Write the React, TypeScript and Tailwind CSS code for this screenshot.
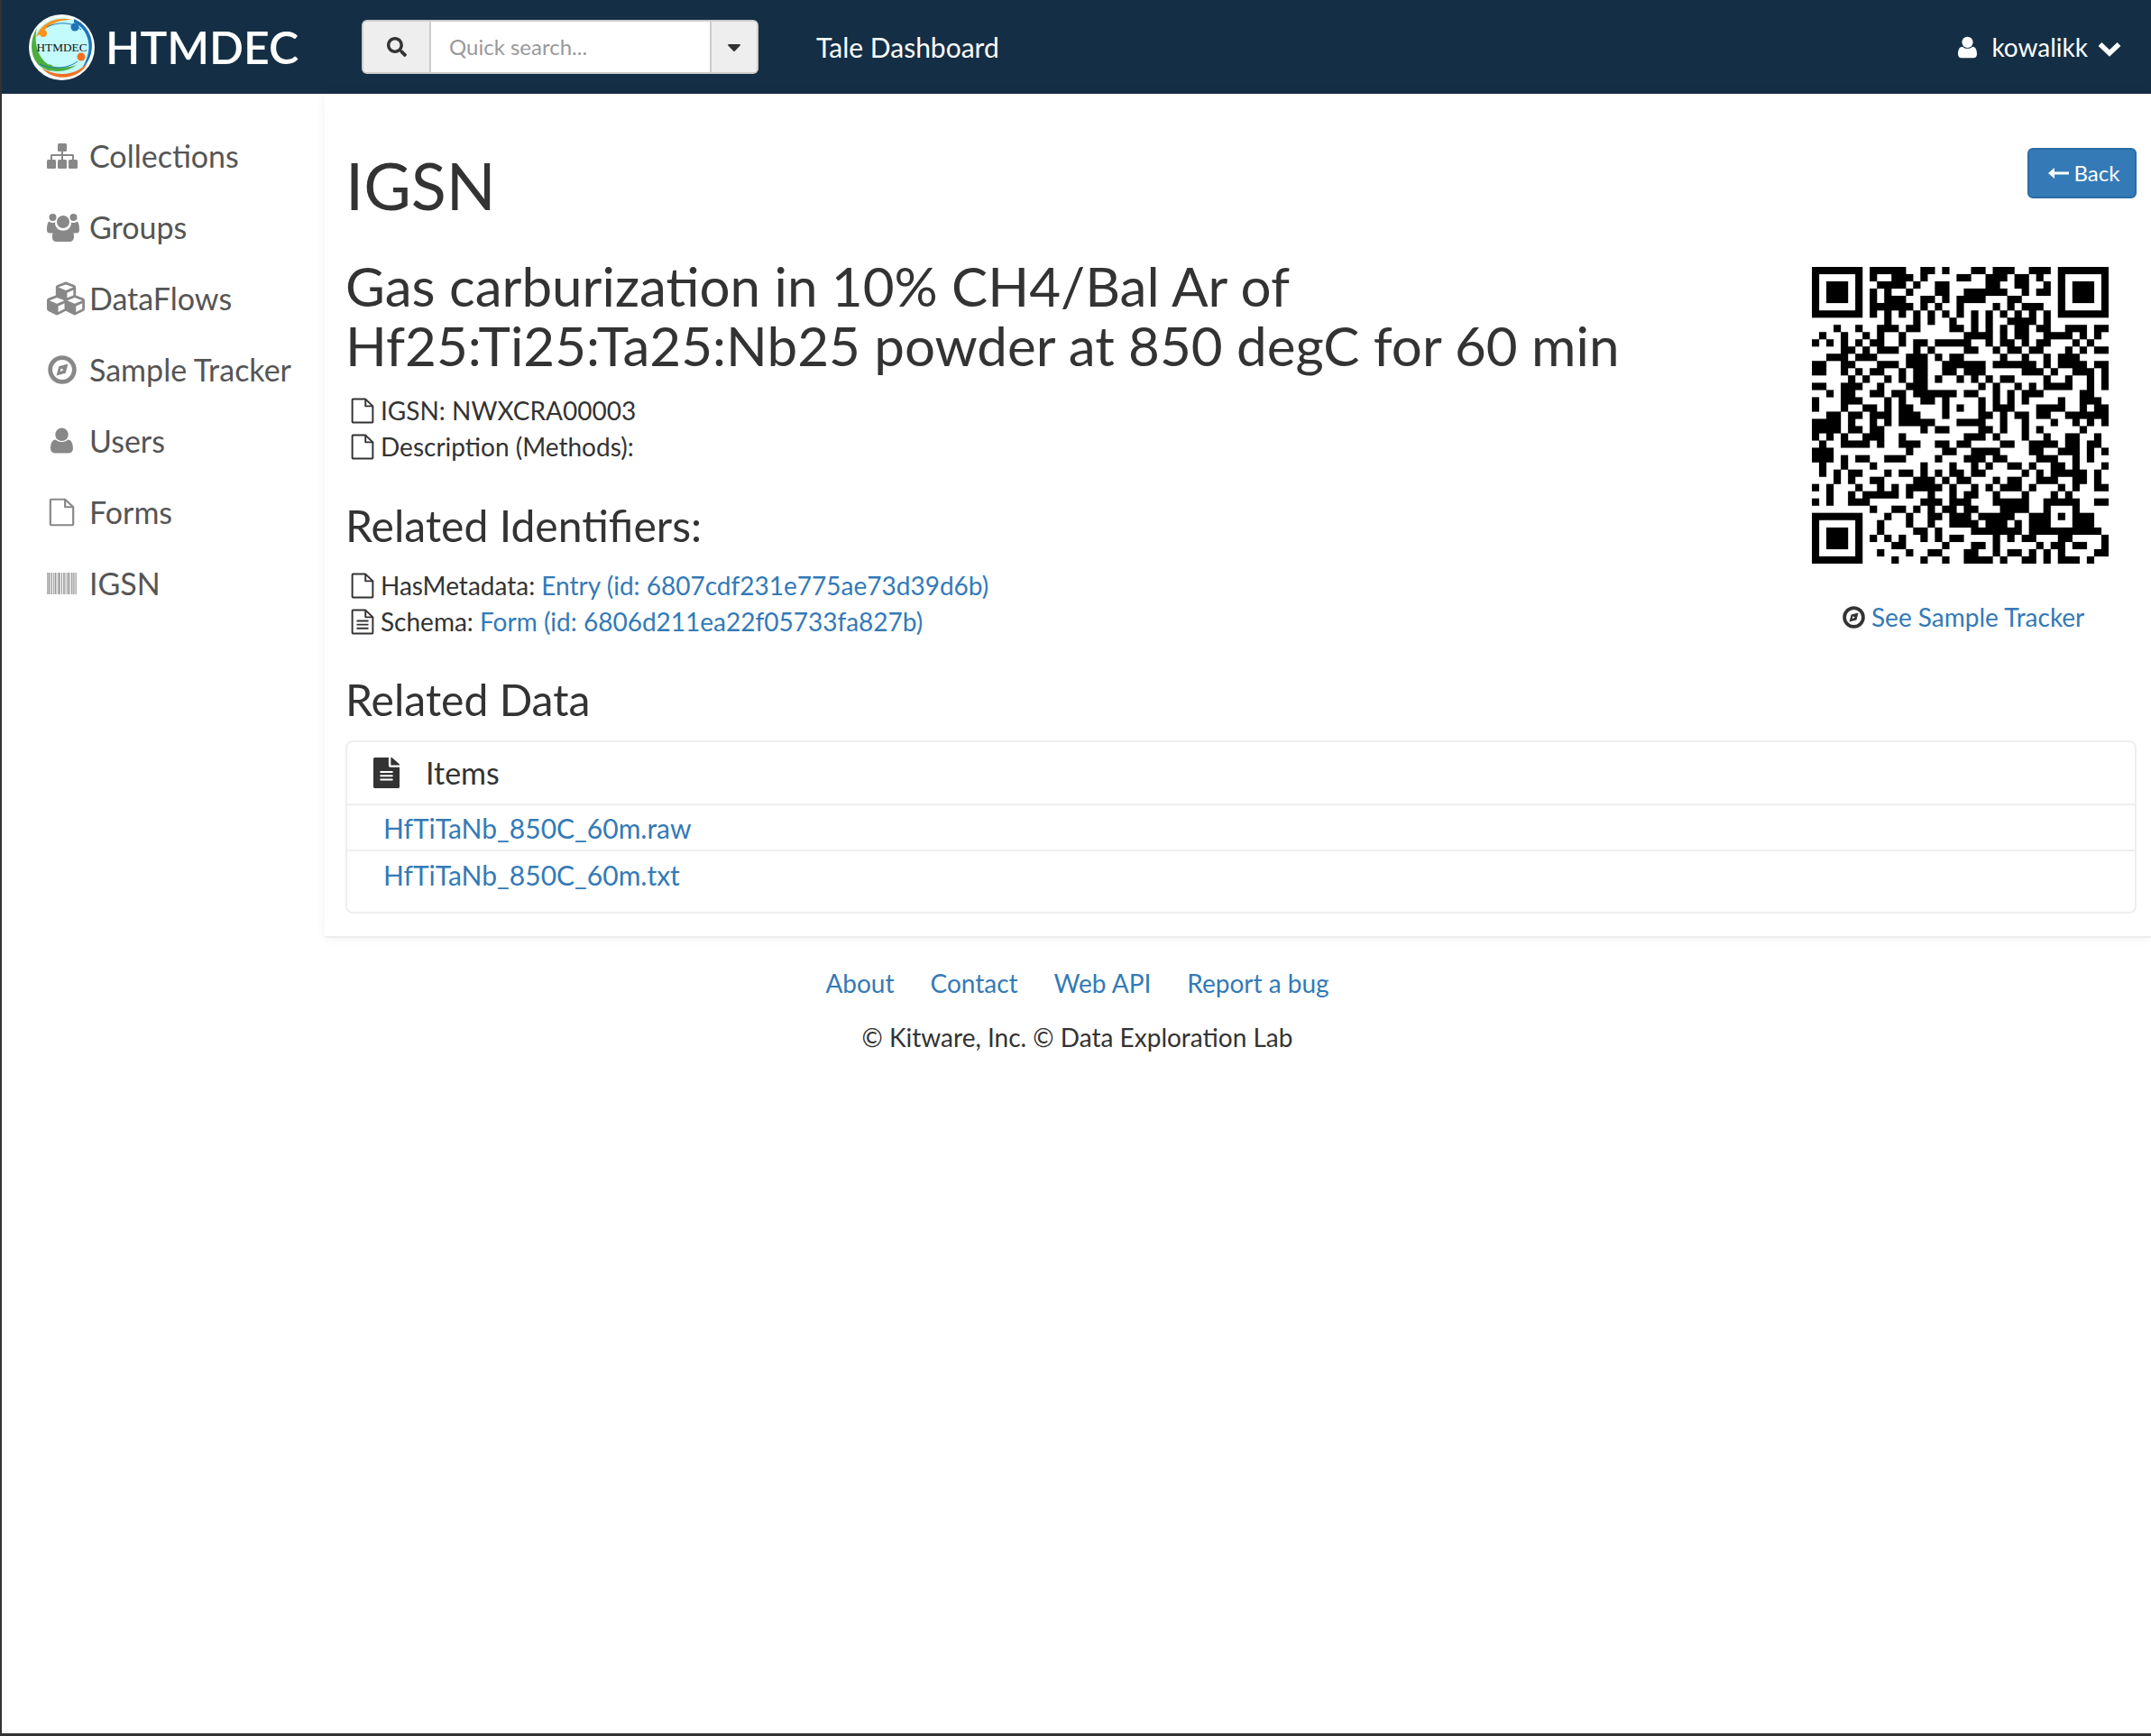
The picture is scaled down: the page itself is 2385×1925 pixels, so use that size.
import React from "react";
import { FaCubes, FaSearch, FaCaretDown, FaFileAlt } from "react-icons/fa";

const QR: number[][] = [
[0,6,8,12,15,16,18,18,22,23,25,27,30,32,34,40],
[0,0,6,6,8,8,11,13,15,15,20,21,24,26,28,29,31,31,34,34,40,40],
[0,0,2,4,6,6,9,12,14,14,17,18,24,25,28,29,32,32,34,34,36,38,40,40],
[0,0,2,4,6,6,8,8,10,10,13,13,17,18,21,26,29,29,31,32,34,34,36,38,40,40],
[0,0,2,4,6,6,8,8,10,12,15,16,18,18,20,23,27,28,34,34,36,38,40,40],
[0,0,6,6,8,13,15,15,17,17,20,20,25,25,27,27,29,31,34,34,40,40],
[0,6,8,8,10,10,12,12,14,14,16,16,18,18,20,20,22,22,24,24,26,26,28,28,30,30,32,32,34,40],
[10,10,14,14,16,16,19,19,22,22,24,24,27,30,32,32],
[3,3,6,6,9,11,13,14,19,20,22,22,24,24,26,26,28,29,31,32,35,37,39,40],
[1,1,4,4,7,7,9,9,12,12,21,24,26,26,28,29,32,35,37,37,39,39],
[0,0,2,2,4,4,6,6,8,9,12,12,14,15,17,21,24,24,26,27,29,29,31,32,36,36,38,38],
[4,5,7,7,9,11,14,14,16,16,21,22,25,25,27,28,30,31,35,35,37,37,39,40],
[2,4,6,8,13,15,17,17,19,20,26,26,29,29,32,32,34,36],
[0,1,4,5,9,11,13,15,18,23,25,30,32,32,34,37,39,40],
[0,1,4,4,6,6,8,9,12,12,14,15,18,19,21,23,29,31,33,33,36,38,40,40],
[5,5,7,7,10,10,12,12,14,15,17,17,20,20,22,22,24,24,26,27,32,32,35,35,38,38,40,40],
[0,1,4,6,9,9,13,15,23,23,25,25,28,28,30,30,32,35,38,38,40,40],
[2,2,4,5,8,9,11,12,14,19,21,22,25,25,27,27,29,31,37,38],
[0,0,4,6,10,10,12,12,15,16,18,18,23,23,25,25,27,27,29,29,34,34,37,39],
[0,0,4,4,7,8,10,10,12,13,18,18,20,20,23,23,25,27,31,34,37,37,39,40],
[2,3,5,6,8,10,12,14,18,18,23,24,26,26,28,29,31,32,35,40],
[0,3,5,5,8,8,10,10,12,16,20,23,26,26,29,29,33,33,36,36,38,38,40,40],
[0,3,5,6,8,9,15,15,17,18,23,24,26,26,29,29,31,31,37,37],
[0,0,2,2,4,4,7,9,12,12,21,23,25,25,29,29,32,32,35,36,39,39],
[1,1,4,7,9,9,12,14,17,18,20,21,26,27,30,33,35,36,38,39],
[0,2,13,13,18,19,22,25,30,31,34,36,38,38,40,40],
[0,2,4,4,6,7,10,12,17,17,21,23,25,26,31,33,36,36,38,38],
[1,1,4,4,8,8,15,15,19,19,22,22,24,24,27,28,30,30,33,34,36,36,40,40],
[1,1,3,3,5,6,10,10,12,13,15,15,17,17,19,20,22,23,29,29,31,31,33,37,39,39],
[3,3,5,5,8,9,14,16,18,18,20,21,25,25,27,28,31,33,36,37,39,39],
[0,0,2,2,6,6,9,9,11,11,13,17,19,19,22,22,24,24,26,28,30,30,34,34,36,36,39,40],
[2,2,5,5,7,11,13,13,16,16,19,19,21,22,25,25,29,29,33,33,35,35],
[0,0,2,2,5,7,15,17,19,21,25,29,32,36,39,40],
[8,8,11,12,14,14,16,16,18,19,21,22,26,29,32,32,36,36],
[0,6,10,10,13,13,16,17,19,21,23,27,30,32,34,34,36,38],
[0,0,6,6,9,9,13,13,16,16,19,22,24,26,28,28,30,32,36,38],
[0,0,2,4,6,6,9,9,14,15,17,17,22,28,30,39],
[0,0,2,4,6,6,8,8,10,10,12,12,15,15,17,17,19,20,25,25,27,27,29,30,34,35,40,40],
[0,0,2,4,6,6,11,12,18,18,22,23,25,25,31,31,33,34,36,37,40,40],
[0,0,6,6,9,9,13,13,16,17,21,22,25,25,27,28,30,30,32,32,34,34,39,40],
[0,6,11,11,15,15,18,18,21,24,26,26,29,30,32,32,34,36,38,38],
];

function QrCode() {
  const d = QR.map((row, y) => {
    let s = "";
    for (let i = 0; i < row.length; i += 2) s += `M${row[i]} ${y}H${row[i + 1] + 1}V${y + 1}H${row[i]}Z`;
    return s;
  }).join("");
  return (
    <svg viewBox="0 0 41 41" className="w-[329px] h-[329px] block">
      <path d={d} fill="#000" stroke="#000" strokeWidth="0.02" />
    </svg>
  );
}

function FileOutline({ className = "" }: { className?: string }) {
  return (
    <svg viewBox="0 0 24 28" className={className} fill="none" stroke="currentColor" strokeWidth="1.8" strokeLinejoin="round" preserveAspectRatio="none">
      <path d="M1.500 2.200c0-.4.3-.7.7-.7H15l7.500 7.500V25.800c0 .4-.3.7-.7.7H2.200c-.4 0-.7-.3-.7-.7Z" />
      <path d="M15 1.500V9h7.500" />
    </svg>
  );
}

function FileLines({ className = "" }: { className?: string }) {
  return (
    <svg viewBox="0 0 24 28" className={className} fill="none" stroke="currentColor" strokeWidth="1.8" strokeLinejoin="round" preserveAspectRatio="none">
      <path d="M1.500 2.200c0-.4.3-.7.7-.7H15l7.500 7.500V25.800c0 .4-.3.7-.7.7H2.200c-.4 0-.7-.3-.7-.7Z" />
      <path d="M15 1.500V9h7.500M6 13h12M6 17h12M6 21h12" />
    </svg>
  );
}

function UserIcon({ className = "" }: { className?: string }) {
  return (
    <svg viewBox="0 0 24 28" className={className} fill="currentColor">
      <circle cx="12" cy="7.500" r="7" />
      <path d="M5.500 13c2 1.800 4.200 2.500 6.500 2.500s4.500-.7 6.500-2.500c3.500.3 5.500 3.500 5.500 9.500 0 3-1.800 5-4.500 5h-15C1.800 27.500 0 25.500 0 22.500 0 16.500 2 13.300 5.500 13Z" />
    </svg>
  );
}

function CompassIcon({ className = "" }: { className?: string }) {
  return (
    <svg viewBox="0 0 30 30" className={className} fill="none">
      <circle cx="15" cy="15" r="12.500" stroke="currentColor" strokeWidth="4.500" />
      <path d="M21 9 18.500 18.500 9 21 11.500 11.500Z" fill="currentColor" />
      <path d="M13.500 13.500 16.500 15 13 17Z" fill="#fff" />
    </svg>
  );
}

function BarcodeIcon({ className = "" }: { className?: string }) {
  const bars = [0, 1.500, 3.500, 5, 7, 9, 10.500, 12.500, 14, 16, 18, 19.500, 21.500, 23, 25, 27, 28.500, 30.500, 32];
  return (
    <svg viewBox="0 0 34 24" className={className}>
      {bars.map((x, i) => (
        <rect key={i} x={x} y="0" width={i % 3 === 1 ? 1.400 : 0.900} height="24" fill={i % 2 ? "#8f8f8f" : "#a8a8a8"} />
      ))}
    </svg>
  );
}

function SitemapIcon({ className = "" }: { className?: string }) {
  return (
    <svg viewBox="0 0 34 28" className={className} fill="currentColor">
      <rect x="12" y="0" width="10" height="9" rx="1.500" />
      <rect x="0" y="18" width="10" height="10" rx="1.500" />
      <rect x="12" y="18" width="10" height="10" rx="1.500" />
      <rect x="24" y="18" width="10" height="10" rx="1.500" />
      <path d="M16 8h2v4h10.500c.8 0 1.500.7 1.500 1.500V19h-2v-5H18v5h-2v-5H6v5H4v-5.500C4 12.700 4.700 12 5.500 12H16Z" />
    </svg>
  );
}

function UsersIcon({ className = "" }: { className?: string }) {
  return (
    <svg viewBox="0 0 36 32" className={className} fill="currentColor">
      <circle cx="6.500" cy="5" r="4" />
      <circle cx="29.500" cy="5" r="4" />
      <path d="M2.500 9.500c1.200 1 2.500 1.500 4 1.500 1 0 1.800-.2 2.600-.6-.4 3.300 1 5.600 3 7.100-2.800.8-4.400 2.600-5.200 5H3c-2 0-3-1.300-3-3.500 0-4.500.7-8.500 2.500-9.500Z" />
      <path d="M33.500 9.500c-1.200 1-2.500 1.500-4 1.500-1 0-1.800-.2-2.600-.6.4 3.300-1 5.600-3 7.100 2.800.8 4.400 2.600 5.200 5H33c2 0 3-1.300 3-3.500 0-4.500-.7-8.500-2.500-9.500Z" />
      <circle cx="18" cy="10" r="7" />
      <path d="M11.500 17.500c2 1.500 4 2.200 6.500 2.200s4.500-.7 6.500-2.200c3.500.5 5.500 3.300 5.500 9 0 3.200-2 5.500-4.500 5.500h-15C7.500 32 5.500 29.700 6 26.500c0-5.700 2-8.500 5.500-9Z" />
    </svg>
  );
}

function Logo() {
  return (
    <svg viewBox="0 0 73 73" className="w-[73px] h-[73px] shrink-0">
      <circle cx="36.500" cy="36.500" r="36.500" fill="#fff" />
      <circle cx="36.500" cy="36.500" r="33" fill="#c3fafc" />
      <path d="M8 25C14 8 32 2 48 6 42 6 26 6 15 20Z" fill="#f7941d" />
      <path d="M50 5c15 6 23 22 19 38-2 8-6 13-10 17 5-9 9-19 7-30C64 19 57 12 50 9Z" fill="#1e74b8" />
      <path d="M14 59c10 12 28 14 41 6 5-3 8-7 10-11-7 7-16 12-28 12-9 0-17-3-23-7Z" fill="#f26f21" />
      <path d="M9 15C1 27 1 44 9 54c6 7 15 9 24 9 8 0 14-3 20-7-9 3-19 4-28 1C13 53 4 34 9 15Z" fill="#4caf3d" />
      <circle cx="16" cy="21" r="4" fill="#f7941d" />
      <circle cx="51" cy="14" r="4.500" fill="#1e74b8" />
      <circle cx="58" cy="47" r="4.500" fill="#f26f21" />
      <circle cx="23" cy="59" r="3.500" fill="#4caf3d" />
      <path d="M20 14c12-6 28-6 38 3" fill="none" stroke="#1e74b8" strokeWidth="1" />
      <path d="M12 55c12 6 30 6 42-3" fill="none" stroke="#1e74b8" strokeWidth="1" />
      <text x="36.500" y="41" textAnchor="middle" fontFamily="Liberation Serif, serif" fontSize="13.500" textLength="56" lengthAdjust="spacingAndGlyphs" fill="#111">HTMDEC</text>
    </svg>
  );
}

const nav = [
  { t: "Collections", i: <SitemapIcon className="w-[34px] h-[28px]" /> },
  { t: "Groups", i: <UsersIcon className="w-[36px] h-[32px]" /> },
  { t: "DataFlows", i: <FaCubes className="w-[42px] h-[42px]" /> },
  { t: "Sample Tracker", i: <CompassIcon className="w-[32px] h-[32px] ml-[1px]" /> },
  { t: "Users", i: <UserIcon className="w-[25px] h-[29px] ml-[4px]" /> },
  { t: "Forms", i: <FileOutline className="w-[29px] h-[32px] ml-[2px]" /> },
  { t: "IGSN", i: <BarcodeIcon className="w-[34px] h-[24px]" /> },
];

export default function App() {
  return (
    <div className="h-[1925px] overflow-hidden w-full border-l-2 border-b-[3px] border-[#333] bg-white text-[#333] font-['Lato','Noto_Sans',sans-serif] text-[28px] leading-[40px] flex flex-col">
      <header className="h-[104px] bg-[#142f45] flex items-center shrink-0 pl-[30px] pr-[33px] text-white">
        <Logo />
        <span className="ml-[12px] text-[50px] leading-none font-semibold w-[236px]">HTMDEC</span>
        <div className="ml-[48px] flex h-[60px] w-[440px] rounded-[6px] border-2 border-[#ccc] overflow-hidden bg-white text-[#333]">
          <div className="w-[75px] bg-[#eee] border-r-2 border-[#ccc] flex items-center justify-center">
            <FaSearch className="w-[22px] h-[22px]" />
          </div>
          <div className="flex-1 flex items-center pl-[20px] text-[#999] text-[24px]">Quick search...</div>
          <div className="w-[52px] bg-[#eee] border-l-2 border-[#ccc] flex items-center justify-center">
            <FaCaretDown className="w-[24px] h-[24px]" />
          </div>
        </div>
        <span className="ml-[64px] text-[30px]">Tale Dashboard</span>
        <div className="ml-auto flex items-center text-[28px]">
          <UserIcon className="w-[21px] h-[25px] mr-[1px]" />
          <span className="ml-[15px]">kowalikk</span>
          <svg viewBox="0 0 26 18" className="ml-[11px] w-[26px] h-[18px] mt-[3px]" fill="none" stroke="currentColor" strokeWidth="5.500" strokeLinejoin="miter">
            <path d="M2.500 4 13 14 23.500 4" />
          </svg>
        </div>
      </header>
      <div className="flex items-start">
        <aside className="w-[358px] shrink-0 pt-[29px] text-[34px] leading-[51px] text-[#555]">
          {nav.map((n) => (
            <div key={n.t} className="h-[79px] flex items-center pl-[50px]">
              <span className="w-[47px] shrink-0 flex items-center text-[#888]">{n.i}</span>
              <span>{n.t}</span>
            </div>
          ))}
        </aside>
        <main className="flex-1 min-w-0 h-[936px] border-b-2 border-[#eee] shadow-[0_0_12px_rgba(0,0,0,0.06)] pl-[23px] pr-[16px]">
          <div className="flex justify-between items-start pt-[60px]">
            <h1 className="text-[72px] leading-[86px] font-normal -mt-[2px]">IGSN</h1>
            <a className="h-[56px] w-[121px] pl-[4px] rounded-[6px] bg-[#337ab7] border-2 border-[#2e6da4] text-white text-[24px] flex items-center justify-center">
              <svg viewBox="0 0 23 12" className="w-[23px] h-[12px] mr-[6px]" fill="currentColor">
                <path d="M7 0 0 6l7 6V7.500h16v-3H7Z" />
              </svg>
              Back
            </a>
          </div>
          <div className="flex justify-between items-start mt-[36px]">
            <div>
              <h2 className="text-[60.1px] leading-[66px] font-normal w-[1500px]">Gas carburization in 10% CH4/Bal Ar of Hf25:Ti25:Ta25:Nb25 powder at 850 degC for 60 min</h2>
              <div className="mt-[19px] pl-[6px]">
                <div className="flex items-center"><FileOutline className="w-[26px] h-[29px] mr-[7px]" />IGSN: NWXCRA00003</div>
                <div className="flex items-center"><FileOutline className="w-[26px] h-[29px] mr-[7px]" />Description (Methods):</div>
              </div>
              <h3 className="text-[48.1px] leading-[53px] font-normal mt-[41px]">Related Identifiers:</h3>
              <div className="mt-[20px] pl-[6px]">
                <div className="flex items-center"><FileOutline className="w-[26px] h-[29px] mr-[7px]" />HasMetadata:&nbsp;<a className="text-[#337ab7]">Entry (id: 6807cdf231e775ae73d39d6b)</a></div>
                <div className="flex items-center"><FileLines className="w-[26px] h-[29px] mr-[7px]" />Schema:&nbsp;<a className="text-[#337ab7]">Form (id: 6806d211ea22f05733fa827b)</a></div>
              </div>
            </div>
            <div className="w-[329px] mr-[31px] mt-[12px] shrink-0">
              <QrCode />
              <div className="mt-[39px] flex items-center text-[#337ab7] pl-[34px] whitespace-nowrap">
                <CompassIcon className="w-[25px] h-[25px] mr-[7px] text-[#333]" />
                See Sample Tracker
              </div>
            </div>
          </div>
          <h3 className="text-[48.1px] leading-[53px] font-normal mt-[40px]">Related Data</h3>
          <div className="mt-[19px] border-2 border-[#eee] rounded-[8px] h-[192px]">
            <div className="h-[70px] border-b-2 border-[#eee] flex items-center pl-[29px]">
              <FaFileAlt className="w-[29px] h-[34px] mr-[29px]" preserveAspectRatio="none" />
              <span className="text-[34px] leading-none">Items</span>
            </div>
            <div className="h-[51px] border-b-2 border-[#eee] pl-[40px] flex items-center text-[#337ab7] text-[30px]">HfTiTaNb_850C_60m.raw</div>
            <div className="h-[51px] pl-[40px] flex items-center text-[#337ab7] text-[30px]">HfTiTaNb_850C_60m.txt</div>
          </div>
        </main>
      </div>
      <footer className="pt-[30px] pl-[2px] text-center text-[28px]">
        <div className="flex justify-center gap-[40px] text-[#337ab7]">
          <a>About</a><a>Contact</a><a>Web API</a><a>Report a bug</a>
        </div>
        <div className="mt-[20px]">© Kitware, Inc. © Data Exploration Lab</div>
      </footer>
    </div>
  );
}
